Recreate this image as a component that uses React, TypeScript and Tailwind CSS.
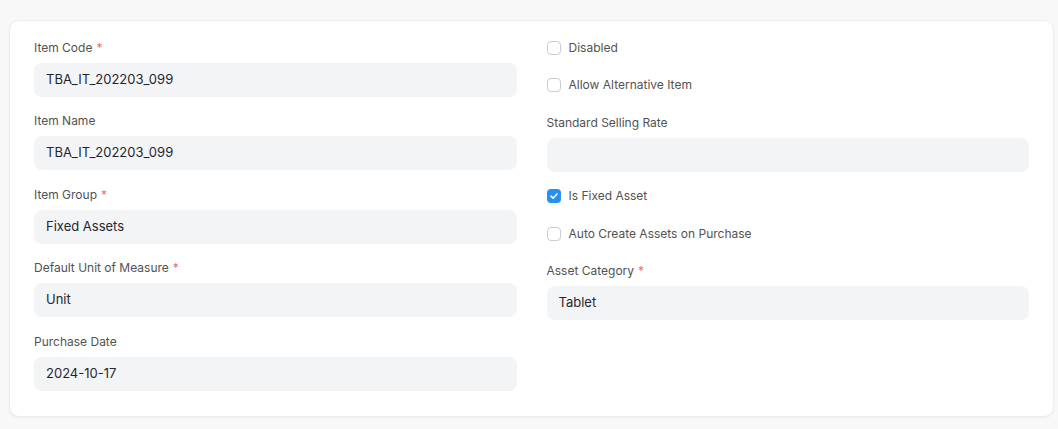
import React from "react";

const font = { fontFamily: "Inter, 'Noto Sans', sans-serif" };

function Field({ label, value, req }: { label: string; value: string; req?: boolean }) {
  return (
    <div className="mb-[15.5px]">
      <div className="h-[18px] text-[12px] leading-[18px] text-[#525252]">
        {label}
        {req && <span className="ml-1 text-[#f56b6b]">*</span>}
      </div>
      <div className="mt-[6px] flex h-[34px] items-center rounded-lg bg-[#f3f4f6] px-3 text-[13px] text-[#1f272e]">
        {value}
      </div>
    </div>
  );
}

function Check({ label, checked }: { label: string; checked?: boolean }) {
  return (
    <div className="mb-[19.5px] flex h-[18px] items-center gap-2 text-[12px] text-[#525252]">
      {checked ? (
        <span className="flex h-[14px] w-[14px] items-center justify-center rounded-[4px] bg-[#2490ef]">
          <svg width="10" height="10" viewBox="0 0 10 10" fill="none">
            <path d="M2 5.2 L4.1 7.2 L8 3" stroke="white" strokeWidth="1.6" strokeLinecap="round" strokeLinejoin="round" />
          </svg>
        </span>
      ) : (
        <span className="h-[14px] w-[14px] rounded-[4px] border border-[#c8cdd3] bg-white" />
      )}
      <span>{label}</span>
    </div>
  );
}

export default function App() {
  return (
    <div className="min-h-[429px] w-[1058px] bg-[#f8f8f8] pl-[9px] pr-[4px] pt-[20px]" style={font}>
      <div className="rounded-[10px] border border-[#ebeef0] bg-white px-[24px] pb-[9.5px] pt-[17.5px] shadow-[0_1px_2px_rgba(0,0,0,0.06)]">
        <div className="grid grid-cols-2 gap-x-[30px]">
          <div>
            <Field label="Item Code" value="TBA_IT_202203_099" req />
            <Field label="Item Name" value="TBA_IT_202203_099" />
            <Field label="Item Group" value="Fixed Assets" req />
            <Field label="Default Unit of Measure" value="Unit" req />
            <Field label="Purchase Date" value="2024-10-17" />
          </div>
          <div>
            <Check label="Disabled" />
            <Check label="Allow Alternative Item" />
            <Field label="Standard Selling Rate" value="" />
            <Check label="Is Fixed Asset" checked />
            <Check label="Auto Create Assets on Purchase" />
            <Field label="Asset Category" value="Tablet" req />
          </div>
        </div>
      </div>
    </div>
  );
}
